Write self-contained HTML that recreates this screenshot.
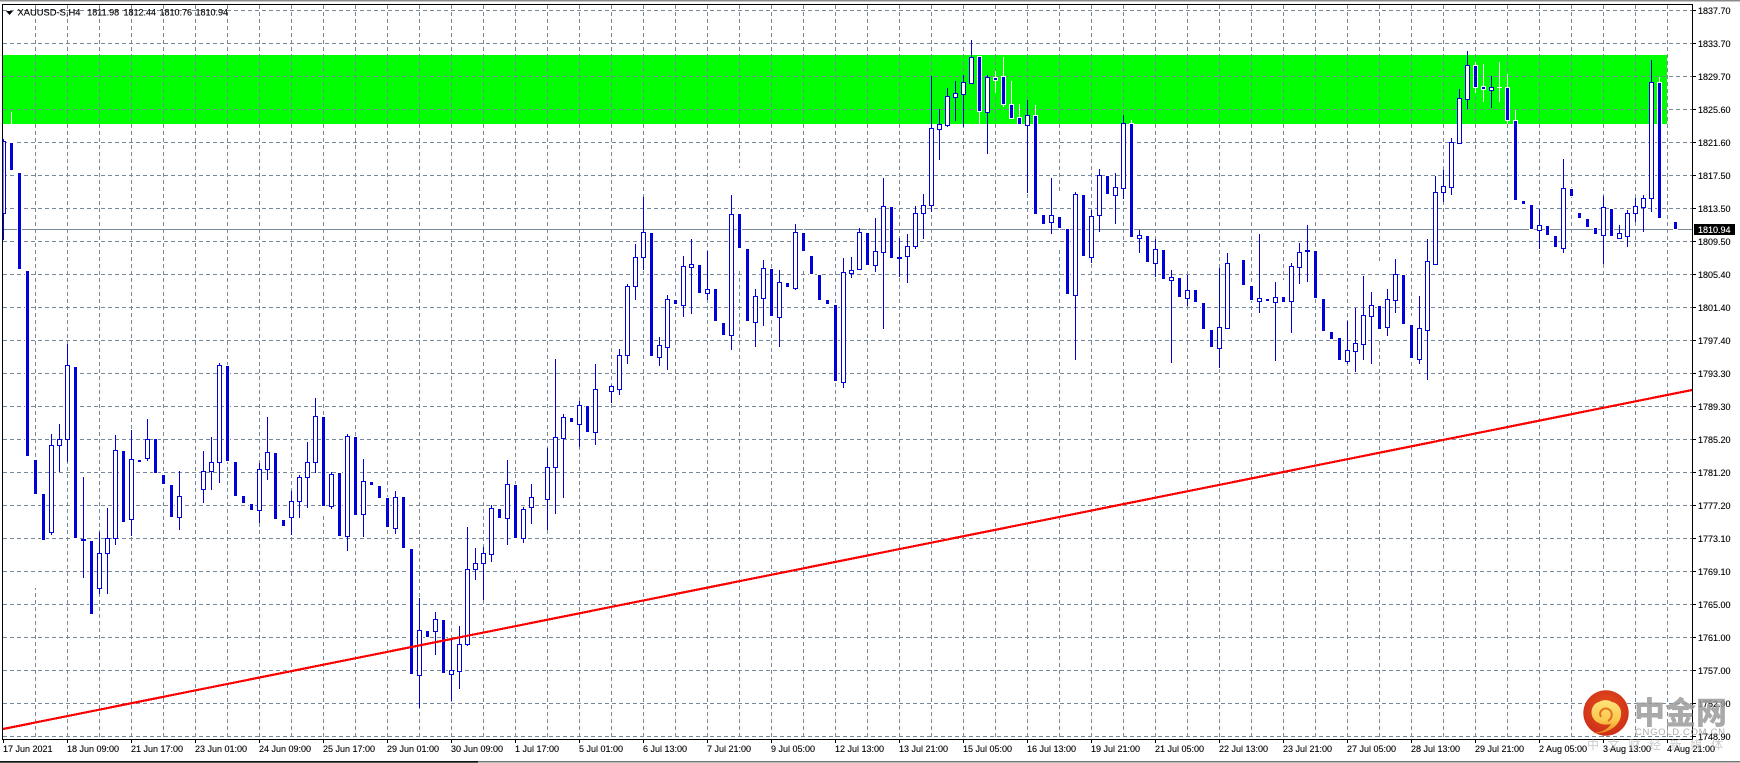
<!DOCTYPE html>
<html lang="zh"><head><meta charset="utf-8"><title>XAUUSD-S,H4</title>
<style>
html,body{margin:0;padding:0;background:#fff;width:1740px;height:763px;overflow:hidden}
svg{display:block;position:absolute;left:0;top:0}
text{font-family:"Liberation Sans","Noto Sans CJK SC",sans-serif;font-size:9px;fill:#000;stroke:#000;stroke-width:.12}
</style></head><body>
<svg width="1740" height="763" viewBox="0 0 1740 763" xmlns="http://www.w3.org/2000/svg">
<defs>
<radialGradient id="rg" cx="50%" cy="40%" r="60%"><stop offset="0" stop-color="#e8501c"/><stop offset="1" stop-color="#cc2f18"/></radialGradient>
<linearGradient id="yg" x1="0" y1="0" x2="0" y2="1"><stop offset="0" stop-color="#fde47a"/><stop offset=".6" stop-color="#fbc94f"/><stop offset="1" stop-color="#ee8a1a"/></linearGradient>
</defs>
<rect x="0" y="0" width="1740" height="1" fill="#8a8a8a"/>
<rect x="0" y="1" width="1740" height="1" fill="#c8c8c8"/>
<rect x="3" y="55" width="1664" height="69" fill="#00ff00" shape-rendering="crispEdges"/>
<g shape-rendering="crispEdges" fill="none">
<path stroke="#778899" stroke-dasharray="4 3" d="M3 10.5H1692M3 43.5H1692M3 76.5H1692M3 109.5H1692M3 142.5H1692M3 175.5H1692M3 208.5H1692M3 241.5H1692M3 274.5H1692M3 307.5H1692M3 340.5H1692M3 373.5H1692M3 406.5H1692M3 439.5H1692M3 472.5H1692M3 505.5H1692M3 538.5H1692M3 571.5H1692M3 604.5H1692M3 637.5H1692M3 670.5H1692M3 703.5H1692M3 736.5H1692"/>
<path stroke="#778899" stroke-dasharray="4 3" d="M35.5 5V739M67.5 5V739M99.5 5V739M131.5 5V739M163.5 5V739M195.5 5V739M227.5 5V739M259.5 5V739M291.5 5V739M323.5 5V739M355.5 5V739M387.5 5V739M419.5 5V739M451.5 5V739M483.5 5V739M515.5 5V739M547.5 5V739M579.5 5V739M611.5 5V739M643.5 5V739M675.5 5V739M707.5 5V739M739.5 5V739M771.5 5V739M803.5 5V739M835.5 5V739M867.5 5V739M899.5 5V739M931.5 5V739M963.5 5V739M995.5 5V739M1027.5 5V739M1059.5 5V739M1091.5 5V739M1123.5 5V739M1155.5 5V739M1187.5 5V739M1219.5 5V739M1251.5 5V739M1283.5 5V739M1315.5 5V739M1347.5 5V739M1379.5 5V739M1411.5 5V739M1443.5 5V739M1475.5 5V739M1507.5 5V739M1539.5 5V739M1571.5 5V739M1603.5 5V739M1635.5 5V739M1667.5 5V739"/>
<path stroke="#778899" d="M3 229.5H1692"/>
<!-- white wicks of bear candles -->
<path stroke="#fff" d="M11.5 112V175M35.5 460V588M323.5 417V513M355.5 437V538M515.5 485V580M739.5 168V268M803.5 217V270M867.5 213V275M979.5 56V130M995.5 71V93M1003.5 57V107M1011.5 81V119M1019.5 104V125M1035.5 105V116M1059.5 193V250M1131.5 120V124M1283.5 280V340M1379.5 263V340M1411.5 316V360M1475.5 62V93M1483.5 64V102M1499.5 62V102M1507.5 74V124M1515.5 110V121M1659.5 77V83"/>
<path fill="#fff" d="M1497 87h5v1h-5z"/>
<!-- bear bodies -->
<path fill="#0000dd" stroke="#fff" stroke-width="2" paint-order="stroke" d="M10 143h3V170h-3zM18 173h3V269h-3zM26 271h3V456h-3zM34 460h3V494h-3zM42 494h3V540h-3zM74 367h3V538h-3zM90 541h3V614h-3zM122 451h3V522h-3zM138 460h3V462h-3zM154 439h3V473h-3zM162 475h3V484h-3zM170 485h3V517h-3zM226 366h3V461h-3zM234 462h3V496h-3zM242 496h3V503h-3zM250 504h3V510h-3zM274 453h3V519h-3zM282 520h3V526h-3zM322 417h3V506h-3zM338 473h3V536h-3zM354 437h3V515h-3zM370 482h3V485h-3zM378 486h3V498h-3zM386 498h3V527h-3zM402 497h3V548h-3zM410 549h3V674h-3zM426 631h3V637h-3zM442 620h3V673h-3zM498 509h3V518h-3zM514 485h3V538h-3zM570 418h3V422h-3zM586 406h3V432h-3zM650 233h3V356h-3zM674 300h3V304h-3zM698 265h3V293h-3zM714 289h3V321h-3zM722 323h3V335h-3zM738 214h3V248h-3zM746 249h3V321h-3zM770 269h3V316h-3zM786 283h3V287h-3zM802 233h3V251h-3zM810 256h3V274h-3zM818 275h3V300h-3zM826 300h3V304h-3zM834 305h3V381h-3zM866 233h3V265h-3zM890 207h3V258h-3zM978 57h3V111h-3zM994 78h3V80h-3zM1002 77h3V104h-3zM1010 105h3V118h-3zM1018 118h3V124h-3zM1034 116h3V214h-3zM1042 215h3V224h-3zM1058 217h3V228h-3zM1066 229h3V294h-3zM1082 195h3V256h-3zM1106 176h3V194h-3zM1130 124h3V237h-3zM1146 236h3V262h-3zM1162 250h3V279h-3zM1178 278h3V297h-3zM1194 290h3V302h-3zM1202 303h3V329h-3zM1210 330h3V347h-3zM1242 260h3V285h-3zM1250 286h3V300h-3zM1266 299h3V301h-3zM1282 297h3V302h-3zM1314 251h3V298h-3zM1322 299h3V331h-3zM1330 332h3V339h-3zM1338 338h3V360h-3zM1378 306h3V329h-3zM1402 275h3V324h-3zM1410 325h3V358h-3zM1474 66h3V87h-3zM1482 87h3V89h-3zM1506 88h3V120h-3zM1514 121h3V200h-3zM1522 201h3V204h-3zM1530 205h3V229h-3zM1546 226h3V235h-3zM1554 236h3V247h-3zM1570 189h3V196h-3zM1578 213h3V218h-3zM1586 219h3V227h-3zM1594 228h3V234h-3zM1610 209h3V236h-3zM1658 83h3V218h-3zM1674 222h3V229h-3z"/>
<!-- bull wicks -->
<path stroke="#0000dd" d="M3.5 139V240M51.5 434V535M59.5 424V472M67.5 344V462M83.5 477V578M99.5 532V594M107.5 508V594M115.5 435V545M131.5 430V536M147.5 419V461M179.5 471V530M203.5 451V503M211.5 437V490M219.5 363V483M259.5 463V523M267.5 417V480M291.5 491V535M299.5 475V518M307.5 442V508M315.5 398V473M331.5 472V509M347.5 434V551M363.5 459V537M395.5 491V534M419.5 598V708M435.5 612V655M451.5 639V701M459.5 626V689M467.5 527V646M475.5 548V580M483.5 547V600M491.5 505V562M507.5 460V545M523.5 507V543M531.5 484V524M547.5 448V530M555.5 359V514M563.5 414V498M579.5 401V447M595.5 364V445M611.5 385V403M619.5 349V395M627.5 284V364M635.5 244V300M643.5 197V270M659.5 337V366M667.5 295V370M683.5 256V317M691.5 239V314M707.5 251V300M731.5 195V350M755.5 289V347M763.5 260V326M779.5 270V347M795.5 224V290M843.5 258V388M851.5 257V278M859.5 228V270M875.5 218V272M883.5 178V329M899.5 238V277M907.5 234V283M915.5 206V249M923.5 194V239M931.5 76V212M939.5 109V160M947.5 88V127M955.5 81V121M963.5 75V127M971.5 40V84M987.5 75V154M1027.5 100V193M1051.5 178V234M1075.5 192V360M1091.5 210V263M1099.5 169V232M1115.5 173V224M1123.5 115V199M1139.5 230V253M1155.5 239V277M1171.5 270V363M1187.5 275V306M1219.5 268V368M1227.5 253V328M1259.5 234V313M1275.5 282V361M1291.5 263V333M1299.5 243V284M1307.5 225V282M1347.5 321V364M1355.5 308V372M1363.5 276V360M1371.5 292V364M1387.5 289V336M1395.5 259V313M1419.5 296V364M1427.5 239V380M1435.5 176V264M1443.5 170V202M1451.5 138V195M1459.5 89V143M1467.5 51V109M1491.5 76V108M1539.5 209V249M1563.5 159V253M1603.5 196V264M1619.5 225V239M1627.5 210V247M1635.5 198V222M1643.5 195V232M1651.5 60V212"/>
<!-- bull bodies -->
<path fill="#fff" stroke="#0000dd" d="M3 141.5h2.5V213.5H3zM49.5 445.5h4V532.5h-4zM57.5 439.5h4V445.5h-4zM65.5 365.5h4V439.5h-4zM97.5 553.5h4V588.5h-4zM105.5 538.5h4V553.5h-4zM113.5 450.5h4V538.5h-4zM129.5 459.5h4V519.5h-4zM145.5 439.5h4V458.5h-4zM177.5 496.5h4V517.5h-4zM201.5 471.5h4V489.5h-4zM209.5 462.5h4V471.5h-4zM217.5 365.5h4V462.5h-4zM257.5 469.5h4V510.5h-4zM265.5 452.5h4V469.5h-4zM289.5 501.5h4V517.5h-4zM297.5 477.5h4V501.5h-4zM305.5 462.5h4V477.5h-4zM313.5 416.5h4V462.5h-4zM329.5 474.5h4V506.5h-4zM345.5 436.5h4V536.5h-4zM361.5 481.5h4V514.5h-4zM393.5 497.5h4V528.5h-4zM417.5 630.5h4V675.5h-4zM433.5 619.5h4V631.5h-4zM449.5 670.5h4V674.5h-4zM457.5 644.5h4V671.5h-4zM465.5 569.5h4V644.5h-4zM473.5 563.5h4V569.5h-4zM481.5 553.5h4V563.5h-4zM489.5 508.5h4V554.5h-4zM505.5 484.5h4V518.5h-4zM521.5 509.5h4V538.5h-4zM529.5 497.5h4V507.5h-4zM545.5 467.5h4V499.5h-4zM553.5 437.5h4V467.5h-4zM561.5 417.5h4V438.5h-4zM577.5 405.5h4V424.5h-4zM593.5 389.5h4V432.5h-4zM609.5 386.5h4V391.5h-4zM617.5 355.5h4V389.5h-4zM625.5 286.5h4V355.5h-4zM633.5 257.5h4V286.5h-4zM641.5 232.5h4V257.5h-4zM657.5 345.5h4V357.5h-4zM665.5 299.5h4V347.5h-4zM681.5 266.5h4V305.5h-4zM689.5 264.5h4V267.5h-4zM705.5 289.5h4V293.5h-4zM729.5 214.5h4V335.5h-4zM753.5 296.5h4V322.5h-4zM761.5 268.5h4V298.5h-4zM777.5 282.5h4V317.5h-4zM793.5 232.5h4V288.5h-4zM841.5 272.5h4V382.5h-4zM849.5 270.5h4V273.5h-4zM857.5 232.5h4V269.5h-4zM873.5 251.5h4V265.5h-4zM881.5 206.5h4V252.5h-4zM905.5 246.5h4V256.5h-4zM913.5 213.5h4V246.5h-4zM921.5 205.5h4V213.5h-4zM929.5 128.5h4V205.5h-4zM937.5 124.5h4V129.5h-4zM945.5 96.5h4V125.5h-4zM953.5 93.5h4V97.5h-4zM961.5 82.5h4V94.5h-4zM969.5 57.5h4V83.5h-4zM985.5 77.5h4V112.5h-4zM1025.5 115.5h4V125.5h-4zM1049.5 215.5h4V222.5h-4zM1073.5 194.5h4V295.5h-4zM1089.5 216.5h4V257.5h-4zM1097.5 175.5h4V215.5h-4zM1113.5 187.5h4V195.5h-4zM1121.5 123.5h4V188.5h-4zM1137.5 235.5h4V238.5h-4zM1153.5 249.5h4V263.5h-4zM1169.5 277.5h4V280.5h-4zM1185.5 290.5h4V298.5h-4zM1217.5 327.5h4V348.5h-4zM1225.5 263.5h4V328.5h-4zM1257.5 298.5h4V301.5h-4zM1273.5 297.5h4V302.5h-4zM1289.5 266.5h4V301.5h-4zM1297.5 252.5h4V267.5h-4zM1345.5 350.5h4V361.5h-4zM1353.5 343.5h4V351.5h-4zM1361.5 315.5h4V344.5h-4zM1369.5 305.5h4V316.5h-4zM1385.5 299.5h4V327.5h-4zM1393.5 274.5h4V300.5h-4zM1417.5 328.5h4V359.5h-4zM1425.5 261.5h4V330.5h-4zM1433.5 192.5h4V264.5h-4zM1441.5 186.5h4V192.5h-4zM1449.5 142.5h4V187.5h-4zM1457.5 98.5h4V143.5h-4zM1465.5 65.5h4V99.5h-4zM1489.5 87.5h4V90.5h-4zM1537.5 225.5h4V230.5h-4zM1561.5 188.5h4V248.5h-4zM1601.5 207.5h4V235.5h-4zM1617.5 233.5h4V238.5h-4zM1625.5 213.5h4V236.5h-4zM1633.5 206.5h4V213.5h-4zM1641.5 198.5h4V207.5h-4zM1649.5 82.5h4V198.5h-4z"/>
<path fill="#0000dd" d="M81 539h5v2h-5zM897 257h5v2h-5zM1305 250h5v2h-5z"/>
<!-- trend line -->
<path stroke="#ff0000" stroke-width="2.2" d="M3 729L1692 390"/>
<!-- axes -->
<path stroke="#000" d="M2.5 4V740M2 4.5H1693M1692.5 4V740M2 739.5H1693"/>
<path stroke="#000" d="M3.5 740V743M67.5 740V743M131.5 740V743M195.5 740V743M259.5 740V743M323.5 740V743M387.5 740V743M451.5 740V743M515.5 740V743M579.5 740V743M643.5 740V743M707.5 740V743M771.5 740V743M835.5 740V743M899.5 740V743M963.5 740V743M1027.5 740V743M1091.5 740V743M1155.5 740V743M1219.5 740V743M1283.5 740V743M1347.5 740V743M1411.5 740V743M1475.5 740V743M1539.5 740V743M1603.5 740V743M1667.5 740V743"/>
<path stroke="#000" d="M1693 10.5h3M1693 43.5h3M1693 76.5h3M1693 109.5h3M1693 142.5h3M1693 175.5h3M1693 208.5h3M1693 241.5h3M1693 274.5h3M1693 307.5h3M1693 340.5h3M1693 373.5h3M1693 406.5h3M1693 439.5h3M1693 472.5h3M1693 505.5h3M1693 538.5h3M1693 571.5h3M1693 604.5h3M1693 637.5h3M1693 670.5h3M1693 703.5h3M1693 736.5h3"/>
<rect x="0" y="761" width="478" height="1" fill="#111"/>
<rect x="0" y="762" width="478" height="1" fill="#555"/>
<rect x="478" y="761" width="1262" height="1" fill="#777"/>
<rect x="478" y="762" width="1262" height="1" fill="#bbb"/>
<rect x="1694" y="224" width="41" height="11" fill="#000"/>
</g>
<!-- header -->
<path d="M6 11h7l-3.5 4z" fill="#000"/>
<text x="17.5" y="15.5" textLength="63" lengthAdjust="spacingAndGlyphs">XAUUSD-S,H4</text>
<text x="87.3" y="15.5">1811.98</text>
<text x="123.5" y="15.5">1812.44</text>
<text x="159.5" y="15.5">1810.76</text>
<text x="195.5" y="15.5">1810.94</text>
<!-- price axis -->
<g>
<text x="1698" y="14">1837.70</text>
<text x="1698" y="47">1833.70</text>
<text x="1698" y="80">1829.70</text>
<text x="1698" y="113">1825.60</text>
<text x="1698" y="146">1821.60</text>
<text x="1698" y="179">1817.50</text>
<text x="1698" y="212">1813.50</text>
<text x="1698" y="245">1809.50</text>
<text x="1698" y="278">1805.40</text>
<text x="1698" y="311">1801.40</text>
<text x="1698" y="344">1797.40</text>
<text x="1698" y="377">1793.30</text>
<text x="1698" y="410">1789.30</text>
<text x="1698" y="443">1785.20</text>
<text x="1698" y="476">1781.20</text>
<text x="1698" y="509">1777.20</text>
<text x="1698" y="542">1773.10</text>
<text x="1698" y="575">1769.10</text>
<text x="1698" y="608">1765.00</text>
<text x="1698" y="641">1761.00</text>
<text x="1698" y="674">1757.00</text>
<text x="1698" y="707">1752.90</text>
<text x="1698" y="740">1748.90</text>
<text x="1698" y="233" style="fill:#fff;stroke:#fff">1810.94</text>
</g>
<!-- time axis -->
<g>
<text x="3" y="752">17 Jun 2021</text>
<text x="67" y="752">18 Jun 09:00</text>
<text x="131" y="752">21 Jun 17:00</text>
<text x="195" y="752">23 Jun 01:00</text>
<text x="259" y="752">24 Jun 09:00</text>
<text x="323" y="752">25 Jun 17:00</text>
<text x="387" y="752">29 Jun 01:00</text>
<text x="451" y="752">30 Jun 09:00</text>
<text x="515" y="752">1 Jul 17:00</text>
<text x="579" y="752">5 Jul 01:00</text>
<text x="643" y="752">6 Jul 13:00</text>
<text x="707" y="752">7 Jul 21:00</text>
<text x="771" y="752">9 Jul 05:00</text>
<text x="835" y="752">12 Jul 13:00</text>
<text x="899" y="752">13 Jul 21:00</text>
<text x="963" y="752">15 Jul 05:00</text>
<text x="1027" y="752">16 Jul 13:00</text>
<text x="1091" y="752">19 Jul 21:00</text>
<text x="1155" y="752">21 Jul 05:00</text>
<text x="1219" y="752">22 Jul 13:00</text>
<text x="1283" y="752">23 Jul 21:00</text>
<text x="1347" y="752">27 Jul 05:00</text>
<text x="1411" y="752">28 Jul 13:00</text>
<text x="1475" y="752">29 Jul 21:00</text>
<text x="1539" y="752">2 Aug 05:00</text>
<text x="1603" y="752">3 Aug 13:00</text>
<text x="1667" y="752">4 Aug 21:00</text>
</g>
<!-- watermark -->
<circle cx="1606" cy="713" r="22.7" fill="url(#rg)"/>
<path d="M1591 733C1602 733 1608 729 1611 724C1603 726 1596 723 1593 718C1589 710 1594 703 1599 702C1603 699 1609 700 1612 702C1618 703 1622 709 1621 715C1620 726 1607 735 1591 733z" fill="url(#yg)"/>
<path d="M1601 717C1598 711 1604 707 1608 709C1613 711 1613 718 1608 721" fill="none" stroke="#e2701f" stroke-width="2"/>
<text x="1634" y="724" style="font-family:'Noto Sans CJK SC',sans-serif;font-size:31px;font-weight:900;fill:#9a9a9a;fill-opacity:.85;stroke:none">中金网</text>
<text x="1635" y="735" textLength="90" style="font-size:9.5px;fill:#9a9a9a;fill-opacity:.8;stroke:none">CNGOLD.COM.CN</text>
<text x="1587" y="749" textLength="136" style="font-size:12px;fill:#a8a8a8;fill-opacity:.6;stroke:none">中文财经新媒体</text>
</svg>
</body></html>
